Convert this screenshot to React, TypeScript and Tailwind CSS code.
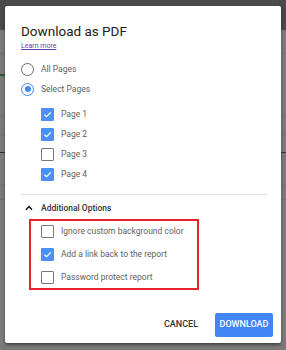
import React from "react";

const font = { fontFamily: "Roboto, 'Liberation Sans', sans-serif" };

function Radio({ checked }: { checked?: boolean }) {
  return (
    <span
      className={
        "flex h-[13px] w-[13px] shrink-0 items-center justify-center rounded-full border-[1.5px] " +
        (checked ? "border-[#4285f4]" : "border-[#6b6b6b]")
      }
    >
      {checked && <span className="h-[6px] w-[6px] rounded-full bg-[#4285f4]" />}
    </span>
  );
}

function Check({ checked }: { checked?: boolean }) {
  if (checked) {
    return (
      <span className="flex h-[13px] w-[13px] shrink-0 items-center justify-center rounded-[1px] bg-[#4f8ef5]">
        <svg width="9" height="9" viewBox="0 0 10 10">
          <path d="M1.6 5.2 L4 7.4 L8.6 2.6" stroke="white" strokeWidth="1.4" fill="none" />
        </svg>
      </span>
    );
  }
  return <span className="h-[13px] w-[13px] shrink-0 rounded-[1px] border-[1.5px] border-[#777]" />;
}

function RadioRow({ label, checked }: { label: string; checked?: boolean }) {
  return (
    <div className="flex h-[20px] items-center gap-[7px]">
      <Radio checked={checked} />
      <span className="text-[8.5px] text-[#5f5f5f]">{label}</span>
    </div>
  );
}

function CheckRow({ label, checked, className = "" }: { label: string; checked?: boolean; className?: string }) {
  return (
    <div className={"flex h-[20px] items-center gap-[7px] " + className}>
      <Check checked={checked} />
      <span className="text-[8.5px] text-[#5f5f5f]">{label}</span>
    </div>
  );
}

export default function App() {
  return (
    <div className="relative h-[350px] w-[286px] overflow-hidden bg-[#7a7a7a]" style={font}>
      <div className="h-[30px] w-full bg-[#4a4a4a]" />
      <div className="mt-[23px] h-px w-full bg-[#6e6e6e]" />
      <div className="mt-[20px] h-[2px] w-[8px] bg-[#2f5a2f]" />
      <div className="mt-[40px] h-px w-full bg-[#6e6e6e]" />
      <div className="mt-[17px] h-px w-full bg-[#6e6e6e]" />
      <div className="mt-[17px] h-px w-full bg-[#333]" />
      <div className="mt-[32px] h-px w-full bg-[#6e6e6e]" />
      <div className="mt-[13px] h-px w-full bg-[#6e6e6e]" />

      <div className="absolute left-[5px] top-[6px] flex h-[337px] w-[276px] flex-col rounded-[2px] bg-white pl-[16px] pt-[17px] shadow-[0_2px_3px_rgba(0,0,0,0.45)]">
        <div className="text-[13.5px] leading-[16px] text-[#212121]">Download as PDF</div>
        <div className="mt-[3px] text-[7px] leading-[8px] text-[#673ab7] underline">Learn more</div>

        <div className="mt-[9px] flex flex-col">
          <RadioRow label="All Pages" />
          <RadioRow label="Select Pages" checked />
        </div>

        <div className="mt-[5px] flex flex-col pl-[20px]">
          <CheckRow label="Page 1" checked />
          <CheckRow label="Page 2" checked />
          <CheckRow label="Page 3" />
          <CheckRow label="Page 4" checked />
        </div>

        <div className="mr-[14px] mt-[10px] h-px bg-[#e0e0e0]" />

        <div className="mt-[3px] flex h-[20px] items-center">
          <svg width="8" height="6" viewBox="0 0 8 6" className="ml-[4px]">
            <path d="M1 4.8 L4 1.6 L7 4.8" stroke="#111" strokeWidth="1.5" fill="none" />
          </svg>
          <span className="ml-[8px] text-[8.5px] font-medium text-[#333]">Additional Options</span>
        </div>

        <div className="ml-[8px] mt-px flex w-[170px] flex-col border-2 border-[#e8232b] pb-px pl-[10px]">
          <CheckRow label="Ignore custom background color" />
          <CheckRow label="Add a link back to the report" checked className="mt-[3px]" />
          <CheckRow label="Password protect report" className="mt-[3px]" />
        </div>

        <div className="mt-[23px] flex items-center justify-end gap-[9px] pr-[8px]">
          <button className="px-[8px] text-[9px] font-medium text-[#333]">CANCEL</button>
          <button className="flex h-[24px] w-[58px] items-center justify-center rounded-[2px] bg-[#4285f4] text-[9px] font-medium text-white">
            DOWNLOAD
          </button>
        </div>
      </div>
    </div>
  );
}
